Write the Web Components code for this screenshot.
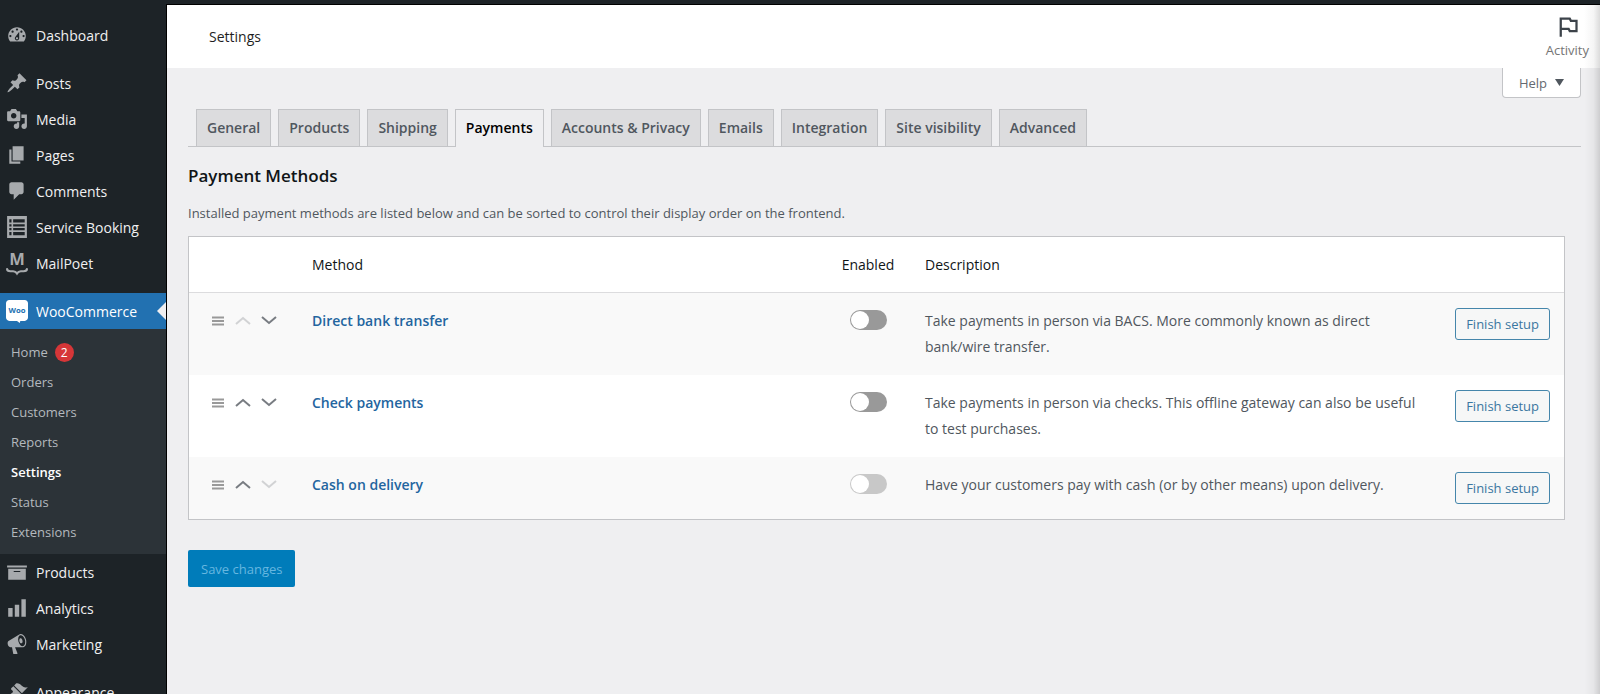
<!DOCTYPE html>
<html lang="en">
<head>
<meta charset="utf-8">
<meta name="viewport" content="width=device-width, initial-scale=1">
<title>WooCommerce settings</title>
<style>
	body {
		background: #efeff1;
		font-family: 'Open Sans', 'Noto Sans', sans-serif;
		font-size: 14px;
		margin: 0;
	}
</style>
</head>
<body>
<admin-shell>
	<admin-menu slot="menu"></admin-menu>
	<page-header slot="header" heading="Settings"></page-header>
	<help-tab slot="help"></help-tab>
	<settings-tabs selected="Payments"></settings-tabs>
	<payment-methods></payment-methods>
	<save-button>Save changes</save-button>
</admin-shell>

<script>
const icons = {
	dashboard: '<path d="M3.76 16h12.48c1.1-1.37 1.76-3.11 1.76-5 0-4.42-3.58-8-8-8s-8 3.58-8 8c0 1.89.66 3.63 1.76 5zM10 4c.55 0 1 .45 1 1s-.45 1-1 1-1-.45-1-1 .45-1 1-1zM6 6c.55 0 1 .45 1 1s-.45 1-1 1-1-.45-1-1 .45-1 1-1zm8 0c.55 0 1 .45 1 1s-.45 1-1 1-1-.45-1-1 .45-1 1-1zm-5.37 5.55L12 7v6c0 1.1-.9 2-2 2s-2-.9-2-2c0-.57.24-1.08.63-1.45zM4 10c.55 0 1 .45 1 1s-.45 1-1 1-1-.45-1-1 .45-1 1-1zm12 0c.55 0 1 .45 1 1s-.45 1-1 1-1-.45-1-1 .45-1 1-1zm-5 3c0-.55-.45-1-1-1s-1 .45-1 1 .45 1 1 1 1-.45 1-1z"/>',
	pin: '<path d="M10.44 3.02l1.82-1.82 6.36 6.35-1.83 1.82c-1.05-.68-2.48-.57-3.41.36l-.75.75c-.92.93-1.04 2.35-.35 3.41l-1.83 1.82-2.41-2.41-2.8 2.79c-.42.42-3.38 2.71-3.8 2.29s1.86-3.39 2.28-3.81l2.79-2.79L4.1 9.36l1.83-1.82c1.05.69 2.48.57 3.4-.36l.75-.75c.93-.92 1.05-2.35.36-3.41z"/>',
	media: '<path d="M13 11V4c0-.55-.45-1-1-1h-1.67L9 1H5L3.67 3H2c-.55 0-1 .45-1 1v7c0 .55.45 1 1 1h10c.55 0 1-.45 1-1zM7 4.5c1.38 0 2.5 1.12 2.5 2.5S8.38 9.5 7 9.5 4.5 8.38 4.5 7 5.62 4.5 7 4.5zM14 6h5v10.5c0 1.38-1.12 2.5-2.5 2.5S14 17.88 14 16.5s1.12-2.5 2.5-2.5c.17 0 .34.02.5.05V9h-3V6zm-4 8.05V13h2v3.5c0 1.38-1.12 2.5-2.5 2.5S7 17.88 7 16.5 8.12 14 9.5 14c.17 0 .34.02.5.05z"/>',
	page: '<path d="M6 15V2h10v13H6zm-1 1h8v2H3V5h2v11z"/>',
	comment: '<path d="M5 2h9c1.1 0 2 .9 2 2v7c0 1.1-.9 2-2 2h-2l-5 5v-5H5c-1.1 0-2-.9-2-2V4c0-1.1.9-2 2-2z"/>',
	list: '<path fill-rule="evenodd" d="M1 0h18v20H1zM3 3v3h2V3zM6.500 3v3H17V3zM3 7.500v2h2v-2zM6.500 7.500v2H17v-2zM3 11v2h2v-2zM6.500 11v2H17v-2zM3 14.500v3h2v-3zM6.500 14.500v3H17v-3z"/>',
	mailpoet: '<text x="10" y="12" font-size="15" font-weight="700" text-anchor="middle">M</text><path d="M1 15.500c0 1.500 1 2 3 2h2.500c2 0 2.500.5 3.500 2 1-1.500 1.500-2 3.500-2H16c2 0 3-.5 3-2" fill="none" stroke="currentColor" stroke-width="2" stroke-linecap="round"/>',
	woo: '<path fill="#fff" d="M3 0h14c1.700 0 3 1.300 3 3v13c0 1.700-1.300 3-3 3h-4l-.5 2L10 19H3c-1.700 0-3-1.300-3-3V3c0-1.700 1.300-3 3-3z"/><text x="10" y="12" font-size="7" font-weight="700" text-anchor="middle" fill="#2271b1">Woo</text>',
	archive: '<path d="M19 4v2H1V4h18zM2 7h16v10H2V7zm11 3V9H7v1h6z"/>',
	chart: '<path d="M18 18V2h-4v16h4zm-6 0V7H8v11h4zm-6 0v-8H2v8h4z"/>',
	megaphone: '<path fill-rule="evenodd" d="M18.15 5.94c.46 1.62.38 3.22-.02 4.48-.42 1.28-1.26 2.18-2.3 2.48-.16.06-.26.06-.4.06-.06.02-.12.02-.18.02-.06.02-.14.02-.22.02h-6.8l2.22 5.5c.02.14-.06.26-.14.34-.08.1-.24.16-.34.16H6.95c-.1 0-.26-.06-.34-.16-.08-.08-.16-.2-.14-.34l-1-5.5H4.25l-.02-.02c-.5.06-1.08-.18-1.54-.62s-.88-1.08-1.06-1.88c-.24-.8-.2-1.56-.02-2.2.18-.62.58-1.08 1.06-1.3l.02-.02 9-5.4c.1-.06.18-.1.24-.16.06-.04.14-.08.24-.12.16-.08.28-.12.5-.18 1.04-.3 2.24.1 3.22.98s1.84 2.24 2.26 3.86zm-2.58 5.98h-.02c.4-.1.74-.34 1.04-.7.58-.7.86-1.76.86-3.04 0-.64-.1-1.3-.28-1.98-.34-1.36-1.02-2.5-1.78-3.24s-1.68-1.1-2.46-.88c-.82.22-1.4.96-1.7 2-.32 1.04-.28 2.36.06 3.72.38 1.36 1 2.5 1.8 3.24.78.74 1.62 1.1 2.48.88zm-2.54-7.08c.22-.04.42-.02.62.04.38.16.76.48 1.02 1s.42 1.2.42 1.78c0 .3-.04.56-.12.8-.18.48-.44.84-.86.94-.34.1-.8-.06-1.14-.4s-.64-.86-.78-1.5c-.18-.62-.12-1.24.02-1.72s.48-.84.82-.94z"/>',
	brush: '<path d="M14.48 11.06L7.41 3.99l1.5-1.5c.5-.56 2.3-.47 3.51.32 1.21.8 1.43 1.28 2.91 2.1 1.18.64 2.45 1.26 4.45.85zm-.71.71L6.7 4.7 4.93 6.47c-.39.39-.39 1.02 0 1.41l1.06 1.06c.39.39.39 1.03 0 1.42-.6.6-1.43 1.11-2.21 1.69-.35.26-.7.53-1.01.84C1.43 14.23.4 16.08 1.4 17.07c.99 1 2.84-.03 4.18-1.36.31-.31.58-.66.85-1.02.57-.78 1.08-1.61 1.69-2.21.39-.39 1.02-.39 1.41 0l1.06 1.06c.39.39 1.02.39 1.41 0z"/>'
};

const data = {
	menu: [
		[{ label: 'Dashboard', icon: 'dashboard' }],
		[
			{ label: 'Posts', icon: 'pin' },
			{ label: 'Media', icon: 'media' },
			{ label: 'Pages', icon: 'page' },
			{ label: 'Comments', icon: 'comment' },
			{ label: 'Service Booking', icon: 'list' },
			{ label: 'MailPoet', icon: 'mailpoet' }
		],
		[
			{
				label: 'WooCommerce',
				icon: 'woo',
				children: ['Home', 'Orders', 'Customers', 'Reports', 'Settings', 'Status', 'Extensions']
			},
			{ label: 'Products', icon: 'archive' },
			{ label: 'Analytics', icon: 'chart' },
			{ label: 'Marketing', icon: 'megaphone' }
		],
		[{ label: 'Appearance', icon: 'brush' }]
	],
	currentPage: 'Settings',
	notices: { Home: 2 },
	tabs: ['General', 'Products', 'Shipping', 'Payments', 'Accounts & Privacy', 'Emails', 'Integration', 'Site visibility', 'Advanced'],
	methods: [
		{
			id: 'bacs',
			title: 'Direct bank transfer',
			description: 'Take payments in person via BACS. More commonly known as direct bank/wire transfer.'
		},
		{
			id: 'cheque',
			title: 'Check payments',
			description: 'Take payments in person via checks. This offline gateway can also be useful to test purchases.'
		},
		{
			id: 'cod',
			title: 'Cash on delivery',
			description: 'Have your customers pay with cash (or by other means) upon delivery.',
			locked: true
		}
	]
};

const escape = text => text.replace('&', '&amp;');

class AdminShell extends HTMLElement {
	constructor() {
		super();
		const shadowRoot = this.attachShadow({ mode: 'open' });

		shadowRoot.innerHTML = `
			<style>
				:host {
					background: #1d2327;
					box-sizing: border-box;
					display: grid;
					grid-template-columns: 166px minmax(0, 1fr);
					height: 100vh;
					overflow: hidden;
					padding-top: 4px;
				}

				.page {
					background: #efeff1;
					border-left: 1px solid #000;
					border-top: 1px solid #000;
					overflow: hidden;
					position: relative;
				}

				/* soft shade along the window's right edge */
				.page::after {
					background: linear-gradient(to right, rgba(0, 0, 0, 0), rgba(0, 0, 0, .04) 60%, rgba(0, 0, 0, .14));
					bottom: 0;
					content: '';
					pointer-events: none;
					position: absolute;
					right: 0;
					top: 0;
					width: 16px;
				}

				main {
					padding: 11px 19px 0 21px;
				}

				.help {
					display: flex;
					justify-content: flex-end;
					padding-right: 19px;
				}
			</style>
			<slot name="menu"></slot>
			<div class="page">
				<slot name="header"></slot>
				<div class="help"><slot name="help"></slot></div>
				<main><slot></slot></main>
			</div>
		`;
	}
}

class AdminMenu extends HTMLElement {
	constructor() {
		super();
		this.attachShadow({ mode: 'open' });
		this.render();
	}

	submenu(children) {
		return children.map(child => {
			const count = data.notices[child] ? `<span class="count">${data.notices[child]}</span>` : '';
			const current = child === data.currentPage ? 'aria-current="page"' : '';
			return `<li><a class="sub_link" href="#" ${current}>${child}${count}</a></li>`;
		}).join('');
	}

	items(group) {
		return group.map(item => `
			<li>
				<a class="link ${item.children ? 'open' : ''}" href="#">
					<svg viewBox="0 0 20 20" aria-hidden="true">${icons[item.icon]}</svg>
					<span>${item.label}</span>
				</a>
				${item.children ? `<ul class="submenu">${this.submenu(item.children)}</ul>` : ''}
			</li>`).join('');
	}

	render() {
		this.shadowRoot.innerHTML = `
			<style>
				:host {
					background: #1d2327;
					color: #f0f0f1;
					display: block;
					overflow: hidden;
				}

				nav {
					display: flex;
					flex-direction: column;
					gap: 12px;
					padding-top: 13px;
				}

				ul {
					list-style: none;
					margin: 0;
					padding: 0;
				}

				.link {
					align-items: center;
					color: inherit;
					display: flex;
					gap: 8px;
					height: 36px;
					padding-left: 6px;
					position: relative;
					text-decoration: none;
				}

				svg {
					color: #a7aaad;
					fill: currentColor;
					flex: none;
					height: 22px;
					overflow: visible;
					width: 22px;
				}

				.open {
					background: #2271b1;
					color: #fff;
				}

				.open::after {
					border: 9px solid transparent;
					border-left-width: 0;
					border-right-color: #efeff1;
					content: '';
					position: absolute;
					right: 0;
					top: 9px;
				}

				.submenu {
					background: #2c3338;
					padding: 8px 0 7px;
				}

				.sub_link {
					align-items: center;
					color: #b4b9be;
					display: flex;
					font-size: 13px;
					gap: 7px;
					height: 30px;
					padding-left: 11px;
					text-decoration: none;
				}

				.sub_link[aria-current] {
					color: #fff;
					font-weight: 600;
				}

				.count {
					background: #d63638;
					border-radius: 50%;
					color: #fff;
					font-size: 12px;
					height: 19px;
					line-height: 19px;
					text-align: center;
					width: 19px;
				}
			</style>
			<nav aria-label="Main menu">
				${data.menu.map(group => `<ul>${this.items(group)}</ul>`).join('')}
			</nav>
		`;
	}
}

class PageHeader extends HTMLElement {
	constructor() {
		super();
		const shadowRoot = this.attachShadow({ mode: 'open' });

		shadowRoot.innerHTML = `
			<style>
				:host {
					align-items: center;
					background: #fff;
					display: flex;
					height: 63px;
					justify-content: space-between;
					padding: 0 11px 0 42px;
				}

				h1 {
					color: #1e1e1e;
					font-size: 14px;
					font-weight: 400;
					margin: 0;
				}

				button {
					align-items: center;
					background: none;
					border: 0;
					color: #757575;
					display: flex;
					flex-direction: column;
					font: inherit;
					font-size: 13px;
					line-height: 20px;
					padding: 0;
				}

				svg {
					height: 27px;
					width: 27px;
				}
			</style>
			<h1>${this.getAttribute('heading')}</h1>
			<button type="button">
				<svg viewBox="0 0 24 24" aria-hidden="true" fill="none" stroke="#3c434a" stroke-width="2">
					<path d="M6 21V5h8l1 2h5v9h-6l-1-2H6"/>
				</svg>
				Activity
			</button>
		`;
	}
}

class HelpTab extends HTMLElement {
	constructor() {
		super();
		const shadowRoot = this.attachShadow({ mode: 'open' });

		shadowRoot.innerHTML = `
			<style>
				:host {
					display: block;
				}

				button {
					align-items: center;
					background: #fff;
					border: 1px solid #c3c4c7;
					border-radius: 0 0 4px 4px;
					border-top: 0;
					color: #646970;
					display: flex;
					font: inherit;
					font-size: 13px;
					gap: 8px;
					height: 30px;
					padding: 0 16px;
				}

				svg {
					height: 7px;
					width: 9px;
				}
			</style>
			<button type="button" aria-expanded="false">
				Help
				<svg viewBox="0 0 9 7" aria-hidden="true"><path d="M0 0h9L4.500 7z" fill="#50575e"/></svg>
			</button>
		`;
	}
}

class SettingsTabs extends HTMLElement {
	constructor() {
		super();
		this.attachShadow({ mode: 'open' });
		this.render();
	}

	tabs() {
		const selected = this.getAttribute('selected');

		return data.tabs.map(tab => {
			const current = tab === selected ? 'aria-current="page"' : '';
			return `<a href="#" ${current}>${escape(tab)}</a>`;
		}).join('');
	}

	render() {
		this.shadowRoot.innerHTML = `
			<style>
				:host {
					display: block;
				}

				nav {
					border-bottom: 1px solid #c3c4c7;
					display: flex;
					gap: 7px;
					padding-left: 8px;
				}

				a {
					background: #dcdcde;
					border: 1px solid #c3c4c7;
					border-bottom: 0;
					color: #50575e;
					font-weight: 600;
					line-height: 36px;
					padding: 0 10px;
					text-decoration: none;
					white-space: nowrap;
				}

				a[aria-current] {
					background: #efeff1;
					color: #000;
					margin-bottom: -1px;
				}
			</style>
			<nav aria-label="Settings sections">${this.tabs()}</nav>
		`;
	}
}

class PaymentMethods extends HTMLElement {
	constructor() {
		super();
		this.attachShadow({ mode: 'open' });
		this.render();
	}

	rows() {
		const last = data.methods.length - 1;

		return data.methods.map((method, i) => `
			<tr>
				<td>
					<div class="sort">
						<svg class="handle" viewBox="0 0 12 10" aria-hidden="true"><path d="M0 1.500h12M0 5h12M0 8.500h12"/></svg>
						<button type="button" aria-label="Move up" ${i === 0 ? 'disabled' : ''}>
							<svg viewBox="0 0 14 10" aria-hidden="true"><path d="M0 8l7-6 7 6"/></svg>
						</button>
						<button type="button" aria-label="Move down" ${i === last ? 'disabled' : ''}>
							<svg viewBox="0 0 14 10" aria-hidden="true"><path d="M0 1l7 6 7-6"/></svg>
						</button>
					</div>
				</td>
				<td><a class="title" id="${method.id}" href="#">${method.title}</a></td>
				<td class="status">
					<input type="checkbox" role="switch" aria-labelledby="${method.id}" ${method.locked ? 'disabled' : ''}>
				</td>
				<td class="description">${method.description}</td>
				<td class="action"><button class="setup" type="button">Finish setup</button></td>
			</tr>`).join('');
	}

	render() {
		this.shadowRoot.innerHTML = `
			<style>
				:host {
					color: #50575e;
					display: block;
				}

				h2 {
					color: #101517;
					font-size: 17px;
					font-weight: 600;
					line-height: 24px;
					margin: 17px 0 0;
				}

				p {
					font-size: 13px;
					line-height: 20px;
					margin: 15px 0 13px;
				}

				.box {
					margin-right: 16px;
				}

				table {
					background: #fff;
					border: 1px solid #c3c4c7;
					border-spacing: 0;
					table-layout: fixed;
					width: 100%;
				}

				.col_sort, .col_action {
					width: 123px;
				}

				.col_status {
					width: 82px;
				}

				.col_description {
					width: 532px;
				}

				th {
					border-bottom: 1px solid #dcdcde;
					color: #101517;
					font-weight: 400;
					line-height: 26px;
					padding: 15px 0 14px;
					text-align: left;
				}

				td {
					line-height: 26px;
					padding: 15px 0;
					vertical-align: top;
				}

				tbody tr:nth-child(odd) {
					background: #f9f9f9;
				}

				.sort {
					align-items: center;
					display: flex;
					gap: 12px;
					height: 26px;
					padding-left: 23px;
				}

				.sort svg {
					display: block;
					fill: none;
					height: 10px;
					overflow: visible;
					stroke: #787c82;
					stroke-width: 2;
					width: 14px;
				}

				.sort .handle {
					stroke: #999;
					width: 12px;
				}

				.sort button {
					background: none;
					border: 0;
					padding: 0;
				}

				.sort button:disabled {
					opacity: .3;
				}

				.title {
					color: #23659f;
					font-weight: 600;
					text-decoration: none;
				}

				th.status, td.status {
					text-align: center;
				}

				input {
					appearance: none;
					background: #999;
					border-radius: 10px;
					display: block;
					height: 20px;
					margin: 2px auto;
					padding: 1px;
					width: 37px;
				}

				input::before {
					background: #fff;
					border-radius: 50%;
					content: '';
					display: block;
					height: 18px;
					width: 18px;
				}

				input:checked {
					background: #2271b1;
				}

				input:checked::before {
					margin-left: auto;
				}

				input:disabled {
					background: #c8c8c8;
				}

				th.description, td.description {
					padding-left: 16px;
					padding-right: 16px;
				}

				.action {
					padding-right: 14px;
					text-align: right;
				}

				.setup {
					background: #f6f7f7;
					border: 1px solid #4586ab;
					border-radius: 3px;
					color: #3a76a0;
					display: block;
					font: inherit;
					font-size: 13px;
					height: 32px;
					margin-left: auto;
					padding: 0 10px;
				}
			</style>
			<h2>Payment Methods</h2>
			<p>Installed payment methods are listed below and can be sorted to control their display order on the frontend.</p>
			<div class="box">
				<table>
					<colgroup>
						<col class="col_sort">
						<col>
						<col class="col_status">
						<col class="col_description">
						<col class="col_action">
					</colgroup>
					<thead>
						<tr>
							<th></th>
							<th scope="col">Method</th>
							<th class="status" scope="col">Enabled</th>
							<th class="description" scope="col">Description</th>
							<th></th>
						</tr>
					</thead>
					<tbody>${this.rows()}</tbody>
				</table>
			</div>
		`;
	}
}

class SaveButton extends HTMLElement {
	constructor() {
		super();
		const shadowRoot = this.attachShadow({ mode: 'open' });

		shadowRoot.innerHTML = `
			<style>
				:host {
					display: block;
					margin-top: 30px;
				}

				button {
					background: #007cba;
					border: 0;
					border-radius: 2px;
					color: #66b7e0;
					font: inherit;
					font-size: 13px;
					height: 37px;
					padding: 0 13px;
				}
			</style>
			<button type="submit" disabled><slot></slot></button>
		`;
	}
}

customElements.define('admin-shell', AdminShell);
customElements.define('admin-menu', AdminMenu);
customElements.define('page-header', PageHeader);
customElements.define('help-tab', HelpTab);
customElements.define('settings-tabs', SettingsTabs);
customElements.define('payment-methods', PaymentMethods);
customElements.define('save-button', SaveButton);
</script>
</body>
</html>
